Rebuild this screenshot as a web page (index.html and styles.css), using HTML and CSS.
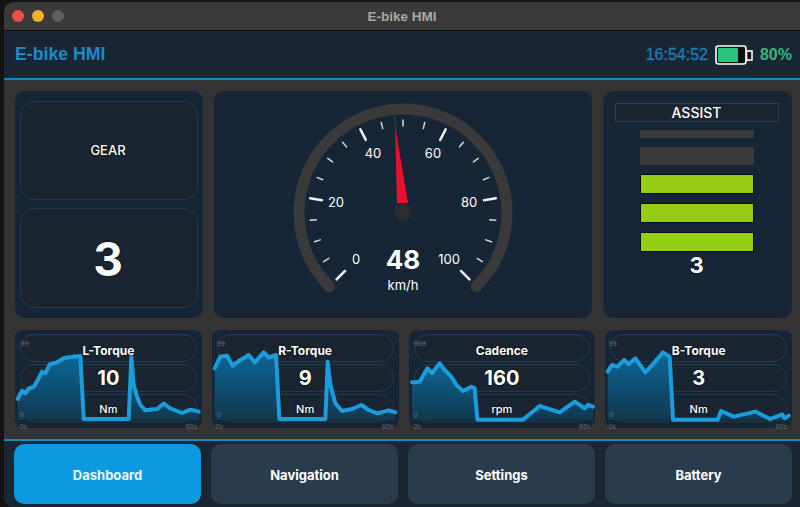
FILE: index.html
```html
<!DOCTYPE html>
<html lang="en">
<head>
    <meta charset="UTF-8">
    <title>E-bike HMI</title>
    <link rel="stylesheet" href="styles.css">
</head>
<body>
    <div class="window">
        <div class="titlebar">
            <div class="lights">
                <span class="light red"></span>
                <span class="light yellow"></span>
                <span class="light gray"></span>
            </div>
            <div class="window-title">E-bike HMI</div>
        </div>

        <header class="header">
            <div class="app-title">E-bike HMI</div>
            <div class="status">
                <span class="clock">16:54:52</span>
                <svg class="battery" viewBox="0 0 38 20" width="38" height="20">
                    <rect x="1" y="1" width="30" height="18" rx="2.5" fill="#111" stroke="#fff" stroke-width="1.6"/>
                    <rect x="3" y="3" width="20" height="14" rx="1" fill="#2cc47c"/>
                    <rect x="31.5" y="6" width="5.5" height="9" fill="#111" stroke="#fff" stroke-width="1.6"/>
                </svg>
                <span class="percent">80%</span>
            </div>
        </header>

        <main class="main">
            <section class="top-row">
                <div class="panel gear">
                    <div class="gear-box gear-label">GEAR</div>
                    <div class="gear-box gear-value">3</div>
                </div>

                <div class="panel speed">
                    <svg class="gauge" viewBox="214 91 378 227" width="378" height="227">
                        <defs>
                            <linearGradient id="area-fill" x1="0" y1="0" x2="0" y2="1">
                                <stop offset="0" stop-color="#0b6797"/>
                                <stop offset="1" stop-color="#11384f"/>
                            </linearGradient>
                        </defs>
                        <path d="M329.5 286.5 A104 104 0 1 1 476.5 286.5" fill="none" stroke="#3a3a3a" stroke-width="11" stroke-linecap="round"/>
                        <g class="tick-major">
                            <line x1="403" y1="119" x2="403" y2="131" transform="rotate(-135 403 213)"/>
                            <line x1="403" y1="119" x2="403" y2="131" transform="rotate(-81 403 213)"/>
                            <line x1="403" y1="119" x2="403" y2="131" transform="rotate(-27 403 213)"/>
                            <line x1="403" y1="119" x2="403" y2="131" transform="rotate(27 403 213)"/>
                            <line x1="403" y1="119" x2="403" y2="131" transform="rotate(81 403 213)"/>
                            <line x1="403" y1="119" x2="403" y2="131" transform="rotate(135 403 213)"/>
                        </g>
                        <g class="tick-minor">
                            <line x1="403" y1="120" x2="403" y2="126" transform="rotate(-121.5 403 213)"/>
                            <line x1="403" y1="120" x2="403" y2="126" transform="rotate(-108 403 213)"/>
                            <line x1="403" y1="120" x2="403" y2="126" transform="rotate(-94.5 403 213)"/>
                            <line x1="403" y1="120" x2="403" y2="126" transform="rotate(-67.5 403 213)"/>
                            <line x1="403" y1="120" x2="403" y2="126" transform="rotate(-54 403 213)"/>
                            <line x1="403" y1="120" x2="403" y2="126" transform="rotate(-40.5 403 213)"/>
                            <line x1="403" y1="120" x2="403" y2="126" transform="rotate(-13.5 403 213)"/>
                            <line x1="403" y1="120" x2="403" y2="126"/>
                            <line x1="403" y1="120" x2="403" y2="126" transform="rotate(13.5 403 213)"/>
                            <line x1="403" y1="120" x2="403" y2="126" transform="rotate(40.5 403 213)"/>
                            <line x1="403" y1="120" x2="403" y2="126" transform="rotate(54 403 213)"/>
                            <line x1="403" y1="120" x2="403" y2="126" transform="rotate(67.5 403 213)"/>
                            <line x1="403" y1="120" x2="403" y2="126" transform="rotate(94.5 403 213)"/>
                            <line x1="403" y1="120" x2="403" y2="126" transform="rotate(108 403 213)"/>
                            <line x1="403" y1="120" x2="403" y2="126" transform="rotate(121.5 403 213)"/>
                        </g>
                        <g class="gauge-num">
                            <text x="356" y="264">0</text>
                            <text x="336" y="207">20</text>
                            <text x="373" y="158">40</text>
                            <text x="433" y="158">60</text>
                            <text x="469" y="207">80</text>
                            <text x="449" y="264">100</text>
                        </g>
                        <circle cx="403" cy="212" r="9" fill="#2a2c2f"/>
                        <polygon points="394,115 395,115 396,126 395,126" fill="#444"/>
                        <polygon points="395,125 397,203 408,203" fill="#e8102e"/>
                        <text class="gauge-value" x="403" y="269">48</text>
                        <text class="gauge-unit" x="403" y="290">km/h</text>
                    </svg>
                </div>

                <div class="panel assist">
                    <div class="assist-title">ASSIST</div>
                    <div class="assist-bars">
                        <div class="bar bar-thin"></div>
                        <div class="bar"></div>
                        <div class="bar on"></div>
                        <div class="bar on"></div>
                        <div class="bar on"></div>
                    </div>
                    <div class="assist-value">3</div>
                </div>
            </section>

            <section class="chart-row">
                <div class="chart-card">
                    <div class="chart-box"></div>
                    <div class="chart-box"></div>
                    <div class="chart-box"></div>
                    <svg class="chart" viewBox="45 15 558 294">
                        <polygon class="area" points="52,222 65,197 75,205 85,190 100,186 112,165 125,140 135,145 148,118 170,112 190,100 210,96 240,93 250,282 385,282 393,95 400,180 410,215 420,240 435,256 470,252 490,236 510,250 545,264 570,254 595,260 595,285 52,285"/>
                        <polyline class="line" points="52,222 65,197 75,205 85,190 100,186 112,165 125,140 135,145 148,118 170,112 190,100 210,96 240,93 250,282 385,282 393,95 400,180 410,215 420,240 435,256 470,252 490,236 510,250 545,264 570,254 595,260"/>
                        <text class="axis" x="60" y="62">99</text>
                        <text class="axis" x="57" y="277">0</text>
                        <text class="axis" x="57" y="313">0s</text>
                        <text class="axis" x="555" y="313">60s</text>
                    </svg>
                    <div class="chart-text">
                        <span class="chart-name">L-Torque</span>
                        <span class="chart-value">10</span>
                        <span class="chart-unit">Nm</span>
                    </div>
                </div>

                <div class="chart-card">
                    <div class="chart-box"></div>
                    <div class="chart-box"></div>
                    <div class="chart-box"></div>
                    <svg class="chart" viewBox="21 15 558 294">
                        <polygon class="area" points="28,130 45,95 65,92 82,122 100,108 130,90 148,112 175,82 190,98 212,90 222,282 360,282 367,110 375,180 390,235 410,258 440,252 468,240 490,255 515,265 550,256 570,262 570,285 28,285"/>
                        <polyline class="line" points="28,130 45,95 65,92 82,122 100,108 130,90 148,112 175,82 190,98 212,90 222,282 360,282 367,110 375,180 390,235 410,258 440,252 468,240 490,255 515,265 550,256 570,262"/>
                        <text class="axis" x="34" y="62">99</text>
                        <text class="axis" x="34" y="277">0</text>
                        <text class="axis" x="30" y="313">0s</text>
                        <text class="axis" x="530" y="313">60s</text>
                    </svg>
                    <div class="chart-text">
                        <span class="chart-name">R-Torque</span>
                        <span class="chart-value">9</span>
                        <span class="chart-unit">Nm</span>
                    </div>
                </div>

                <div class="chart-card">
                    <div class="chart-box"></div>
                    <div class="chart-box"></div>
                    <div class="chart-box"></div>
                    <svg class="chart" viewBox="24 15 558 294">
                        <polygon class="area" points="32,172 42,172 55,170 78,130 92,145 115,115 130,135 150,155 165,180 185,198 210,185 220,190 228,284 365,284 415,243 475,262 520,230 550,250 560,240 575,245 575,285 32,285"/>
                        <polyline class="line" points="32,172 42,172 55,170 78,130 92,145 115,115 130,135 150,155 165,180 185,198 210,185 220,190 228,284 365,284 415,243 475,262 520,230 550,250 560,240 575,245"/>
                        <text class="axis" x="36" y="62">999</text>
                        <text class="axis" x="36" y="277">0</text>
                        <text class="axis" x="36" y="313">0s</text>
                        <text class="axis" x="533" y="313">60s</text>
                    </svg>
                    <div class="chart-text">
                        <span class="chart-name">Cadence</span>
                        <span class="chart-value">160</span>
                        <span class="chart-unit">rpm</span>
                    </div>
                </div>

                <div class="chart-card">
                    <div class="chart-box"></div>
                    <div class="chart-box"></div>
                    <div class="chart-box"></div>
                    <svg class="chart" viewBox="15 15 558 294">
                        <polygon class="area" points="22,140 35,120 50,125 72,105 85,118 105,100 135,142 160,115 188,82 208,95 218,284 352,284 362,258 400,275 465,260 510,282 545,268 552,280 565,272 565,285 22,285"/>
                        <polyline class="line" points="22,140 35,120 50,125 72,105 85,118 105,100 135,142 160,115 188,82 208,95 218,284 352,284 362,258 400,275 465,260 510,282 545,268 552,280 565,272"/>
                        <text class="axis" x="24" y="62">99</text>
                        <text class="axis" x="26" y="277">0</text>
                        <text class="axis" x="24" y="313">0s</text>
                        <text class="axis" x="525" y="313">60s</text>
                    </svg>
                    <div class="chart-text">
                        <span class="chart-name">B-Torque</span>
                        <span class="chart-value">3</span>
                        <span class="chart-unit">Nm</span>
                    </div>
                </div>
            </section>
        </main>

        <nav class="nav">
            <div class="nav-btn active">Dashboard</div>
            <div class="nav-btn">Navigation</div>
            <div class="nav-btn">Settings</div>
            <div class="nav-btn">Battery</div>
        </nav>
    </div>
</body>
</html>
```

FILE: styles.css
```css
* {
    margin: 0;
    padding: 0;
    box-sizing: border-box;
}

body {
    width: 800px;
    height: 507px;
    overflow: hidden;
    background: #141414;
    font-family: Inter, "Liberation Sans", sans-serif;
    color: #fff;
}

.window {
    margin: 2px 0 0 4px;
    height: 505px;
    display: flex;
    flex-direction: column;
    border-radius: 10px 0 0 10px;
    overflow: hidden;
    background: #1a2634;
}

.titlebar {
    height: 29px;
    flex: none;
    display: flex;
    align-items: center;
    position: relative;
    background: #3a3a3a;
    border-bottom: 1px solid #0c0c0c;
}

.lights {
    display: flex;
    gap: 8px;
    padding-left: 8px;
}

.light {
    width: 12px;
    height: 12px;
    border-radius: 50%;
}

.light.red { background: #f0504a; }
.light.yellow { background: #f2b02c; }
.light.gray { background: #5e5e5e; }

.window-title {
    position: absolute;
    left: 0;
    right: 0;
    text-align: center;
    font-family: "Liberation Sans", sans-serif;
    font-size: 13.5px;
    font-weight: 700;
    color: #a8a8a8;
}

.header {
    height: 49px;
    flex: none;
    display: flex;
    align-items: center;
    justify-content: space-between;
    padding: 0 8px 0 11px;
    background: #1a2634;
    border-bottom: 2px solid #1a87c4;
}

.app-title {
    font-family: "Liberation Sans", sans-serif;
    font-size: 17.7px;
    font-weight: 700;
    color: #1b8bc9;
}

.status {
    display: flex;
    align-items: center;
    font-family: "Liberation Sans", sans-serif;
    font-size: 16px;
}

.clock {
    color: #1b7fb8;
    -webkit-text-stroke: 0.3px #1b7fb8;
}

.battery {
    margin: 0 7px 0 7px;
}

.percent {
    font-weight: 700;
    color: #36b67c;
}

.main {
    flex: 1;
    display: flex;
    flex-direction: column;
    gap: 12px;
    padding: 11px 8px 0 11px;
    background: conic-gradient(#2d2d2d 25%, #3a3a3a 0 50%, #2d2d2d 0 75%, #3a3a3a 0) 0 0 / 2px 2px;
}

.top-row {
    display: grid;
    grid-template-columns: 188px 378px 189px;
    gap: 11px;
    height: 227px;
}

.panel {
    background: #172636;
    border-radius: 10px;
}

.gear {
    display: flex;
    flex-direction: column;
    gap: 8px;
    padding: 10px 5px 10px 5px;
}

.gear-box {
    flex: 1;
    display: flex;
    align-items: center;
    justify-content: center;
    padding-right: 2px;
    background: #1a2531;
    border: 1px solid #263a4e;
    border-radius: 14px;
    text-shadow: 0 0 2px #000;
}

.gear-label {
    font-size: 13px;
    font-weight: 500;
    padding-bottom: 1px;
}

.gear-value {
    font-size: 46px;
    font-weight: 700;
    padding-top: 3px;
}

.gauge {
    display: block;
}

.tick-major line {
    stroke: #f2f2f2;
    stroke-width: 2.5;
    stroke-linecap: round;
}

.tick-minor line {
    stroke: #d8d8d8;
    stroke-width: 1.5;
    stroke-linecap: round;
}

.gauge-num text {
    fill: #fff;
    font-size: 13px;
    text-anchor: middle;
}

.gauge-value {
    fill: #fff;
    font-size: 26px;
    font-weight: 700;
    text-anchor: middle;
}

.gauge-unit {
    fill: #fff;
    font-size: 13px;
    text-anchor: middle;
}

.assist {
    display: flex;
    flex-direction: column;
    align-items: center;
    padding: 12px 2px 0 0;
}

.assist-title {
    width: 164px;
    height: 19px;
    line-height: 17px;
    text-align: center;
    font-size: 14px;
    font-weight: 500;
    background: #1a2531;
    border: 1px solid #2a4054;
}

.assist-bars {
    display: flex;
    flex-direction: column;
    gap: 9px;
    margin-top: 8px;
}

.bar {
    width: 114px;
    height: 18px;
    background: #3a3a3a;
}

.bar-thin {
    height: 8px;
}

.bar.on {
    height: 20px;
    background: #93cd15;
    border: 1.5px solid #0b0b0b;
}

.assist-value {
    font-size: 22px;
    font-weight: 700;
    line-height: 26px;
    text-shadow: 0 0 2px #000;
}

.chart-row {
    display: grid;
    grid-template-columns: repeat(4, 1fr);
    gap: 10px;
    height: 98px;
}

.chart-card {
    position: relative;
    display: flex;
    flex-direction: column;
    gap: 2px;
    padding: 4px 5px 6px;
    background: #172636;
    border-radius: 8px;
}

.chart {
    position: absolute;
    left: 0;
    top: 0;
    width: 100%;
    height: 100%;
    overflow: visible;
}

.area {
    fill: url(#area-fill);
}

.line {
    fill: none;
    stroke: #1b9ddc;
    stroke-width: 12;
    stroke-linejoin: round;
    stroke-linecap: round;
}

.axis {
    fill: #6a6f75;
    font-size: 20px;
}

.chart-box {
    flex: 1;
    background: #1a2531;
    border: 1px solid #263a4e;
    border-radius: 14px;
}

/* labels sit over the chart, one per row */
.chart-text {
    position: absolute;
    left: 0;
    right: 0;
    top: 4px;
    bottom: 6px;
    display: flex;
    flex-direction: column;
    gap: 2px;
    text-shadow: 0 0 2px #000;
}

.chart-text span {
    flex: 1;
    display: flex;
    align-items: center;
    justify-content: center;
}

.chart-name {
    font-size: 12px;
    font-weight: 700;
    padding-top: 3px;
}

.chart-value {
    font-size: 20px;
    font-weight: 700;
}

.chart-unit {
    font-size: 11px;
    font-weight: 500;
    padding-top: 2px;
}

.nav {
    height: 68px;
    flex: none;
    display: grid;
    grid-template-columns: repeat(4, 1fr);
    gap: 10px;
    padding: 3px 8px 3px 10px;
    background: #1a2634;
    border-top: 2px solid #1a87c4;
}

.nav-btn {
    display: flex;
    align-items: center;
    justify-content: center;
    height: 60px;
    padding-top: 1px;
    font-size: 13px;
    font-weight: 700;
    background: #2a3b4e;
    border-radius: 10px;
}

.nav-btn.active {
    background: #0b9ade;
    color: #e8f4fb;
}
```
